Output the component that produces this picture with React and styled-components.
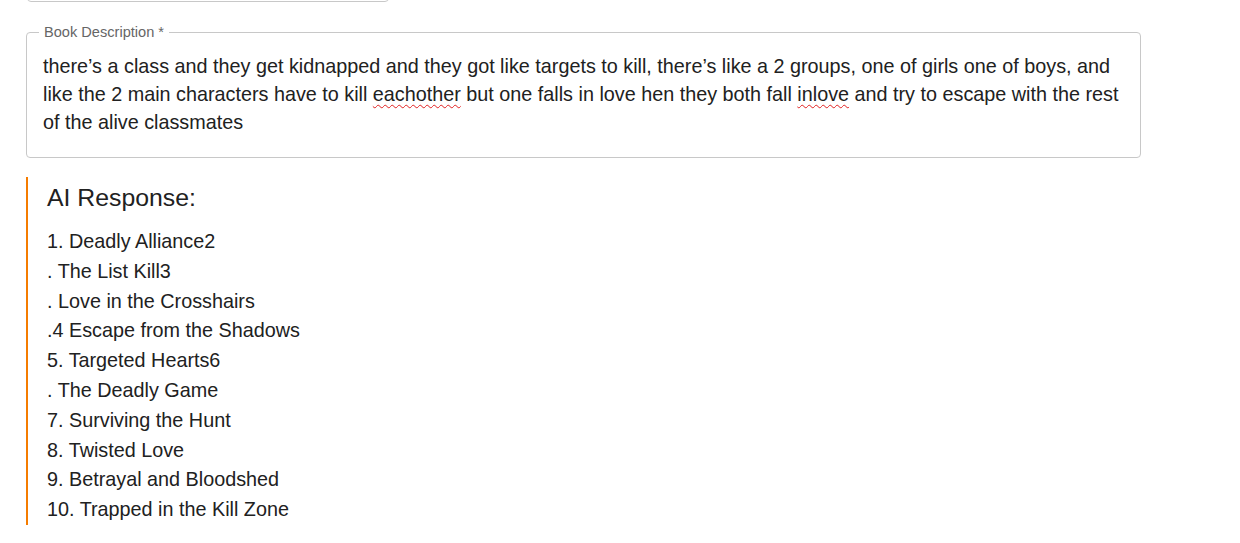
import React from "react";
import styled, { createGlobalStyle } from "styled-components";

const Global = createGlobalStyle`
  html, body { margin: 0; padding: 0; background: #fff; }
  body { font-family: "Liberation Sans", Arial, sans-serif; color: #212121; }
`;

const Page = styled.div`
  padding: 0 0 0 26px;
  width: 1214px;
`;

const PrevField = styled.div`
  height: 40px;
  margin-top: -40px;
  margin-left: 1px;
  width: 360px;
  border: 1px solid #c8c8c8;
  border-radius: 4px;
`;

const Field = styled.fieldset`
  margin: 23px 0 0 0;
  padding: 12px 16px 21px 16px;
  width: 1115px;
  box-sizing: border-box;
  border: 1px solid #c8c8c8;
  border-radius: 4px;
  min-width: 0;
`;

const Legend = styled.legend`
  padding: 0 5px;
  margin-left: -4px;
  font-size: 14.6px;
  line-height: 15px;
  color: #666;
`;

const Body = styled.div`
  font-size: 19.8px;
  line-height: 28px;
  color: #212121;
`;

const Misspelled = styled.span`
  text-decoration: underline wavy #e02020;
  text-decoration-thickness: 1px;
  text-underline-offset: 3px;
  text-decoration-skip-ink: none;
`;

const Response = styled.section`
  margin-top: 19px;
  border-left: 2px solid #f57c00;
  padding: 7px 0 0 19px;
  width: 600px;
`;

const Heading = styled.h2`
  margin: 0 0 15px 0;
  font-size: 24.8px;
  line-height: 28px;
  font-weight: 400;
  color: #212121;
`;

const Line = styled.div`
  font-size: 19.8px;
  line-height: 29.8px;
  color: #212121;
`;

const lines = [
  "1. Deadly Alliance2",
  ". The List Kill3",
  ". Love in the Crosshairs",
  ".4 Escape from the Shadows",
  "5. Targeted Hearts6",
  ". The Deadly Game",
  "7. Surviving the Hunt",
  "8. Twisted Love",
  "9. Betrayal and Bloodshed",
  "10. Trapped in the Kill Zone",
];

export default function App() {
  return (
    <>
      <Global />
      <Page>
        <PrevField />
        <Field>
          <Legend>Book Description *</Legend>
          <Body>
            there’s a class and they get kidnapped and they got like targets to kill, there’s like a 2 groups, one of girls one of boys, and like the 2 main characters have to kill{" "}
            <Misspelled>eachother</Misspelled> but one falls in love hen they both fall{" "}
            <Misspelled>inlove</Misspelled> and try to escape with the rest of the alive classmates
          </Body>
        </Field>
        <Response>
          <Heading>AI Response:</Heading>
          {lines.map((l) => (
            <Line key={l}>{l}</Line>
          ))}
        </Response>
      </Page>
    </>
  );
}
